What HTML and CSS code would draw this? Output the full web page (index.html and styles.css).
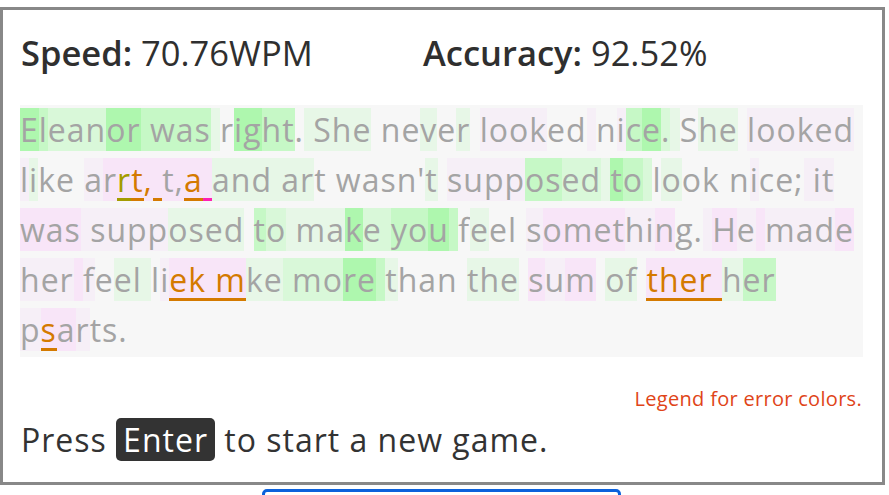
FILE: index.html
```html
<!DOCTYPE html>
<html>
<head>
<meta charset="utf-8">
<link rel="stylesheet" href="styles.css">
</head>
<body>
<div class="game">
  <div class="stats">
    <div class="stat"><b>Speed:</b> 70.76WPM</div>
    <div class="stat"><b>Accuracy:</b> 92.52%</div>
  </div>
  <div class="passage"><span class="g4">E</span><span class="g3">l</span><span class="g2">ean</span><span class="g4">or</span><span class="g3"> was</span><span class="g1"> </span>r<span class="g4">ig</span><span class="g3">ht</span>.<span class="g1"> She</span> ne<span class="g1">v</span>e<span class="g1">r</span> <span class="p1">look</span>ed<span class="p1"> </span>n<span class="p1">i</span><span class="g3">c</span><span class="g4">e</span><span class="g2">.</span><span class="g1"> </span>S<span class="g1">he</span> <span class="p1">looked</span> <span class="p1">l</span><span class="g1">i</span>ke <span class="p1">a</span><span class="p2">r</span><span class="p2 ins">r</span><span class="p2 err ul">t</span><span class="p2 err">,</span><span class="p2 ul"> </span><span class="p2">t,</span><span class="p2 err ul">a</span><span class="p2 ulm"> </span><span class="g1">and </span><span class="g1">ar</span>t wasn'<span class="g1">t</span> <span class="p1">supp</span><span class="g3">os</span><span class="g2">ed</span><span class="g1"> </span><span class="g4">t</span><span class="g3">o</span><span class="g2"> </span>l<span class="g1">o</span>ok n<span class="p1">i</span>ce;<span class="p1"> it</span> <span class="p2">was</span><span class="p1"> supp</span><span class="g1">osed</span> <span class="g3">t</span><span class="g2">o</span><span class="g1"> ma</span><span class="g4">k</span><span class="g2">e </span><span class="g3">yo</span><span class="g4">u</span><span class="g3"> </span>f<span class="g1">e</span>el <span class="p1">s</span><span class="p2">omet</span><span class="p1">hi</span><span class="p2">n</span>g.<span class="p1"> </span><span class="p2">H</span><span class="p1">e</span><span class="p2"> </span><span class="p1">mad</span><span class="p2">e</span> <span class="p1">her</span><span class="p2"> </span><span class="p1">f</span>e<span class="g1">el </span>l<span class="p1">i</span><span class="p2 err ul">ek m</span><span class="g1">ke</span><span class="g2"> mo</span><span class="g4">re</span><span class="g3"> </span><span class="g1">t</span>han <span class="g1">the</span> <span class="p2">s</span><span class="p1">u</span><span class="p2">m</span> <span class="g1">of</span> <span class="p2 err ul">ther </span><span class="g1">h</span><span class="g3">er</span> <span class="p1">p</span><span class="p2 err ul">s</span><span class="p2">a</span><span class="p1">r</span>ts.</div>
  <div class="legend">Legend for error colors.</div>
  <div class="prompt">Press <kbd class="key">Enter</kbd> to start a new game.</div>
</div>
<div class="button"></div>
</body>
</html>
```
FILE: styles.css
```css
html, body {
  margin: 0;
  padding: 0;
  background: #fff;
}
body {
  font-family: "Open Sans", "Noto Sans", sans-serif;
  color: #333;
}
.game {
  margin-top: 7px;
  width: 885px;
  box-sizing: border-box;
  border: 3px solid #888;
  padding: 22px 19px 20px 17px;
}
.stats {
  display: grid;
  grid-template-columns: 402px auto;
  font-size: 34.5px;
  line-height: 1.2;
  color: #2f2f2f;
}
.stat {
  padding-left: 1px;
}
.stat b {
  font-weight: 600;
}
.passage {
  margin-top: 32px;
  background: #f7f7f7;
  font-size: 32px;
  letter-spacing: 1px;
  line-height: 50px;
  color: #a4a4a4;
  padding-bottom: 2px;
}
.g1 { background: #e7f7e7; }
.g2 { background: #d9f8d9; }
.g3 { background: #c6f8c6; }
.g4 { background: #aef7ae; }
.p1 { background: #f6eff7; }
.p2 { background: #f8e5f8; }
.err { color: #d47a00; }
.ins { color: #a39c00; box-shadow: inset 0 -3px 0 #a39c00; }
.ul { box-shadow: inset 0 -3px 0 #d47a00; }
.ulm { box-shadow: inset 0 -3px 0 #ff1fb4; }
.legend {
  margin-top: 28px;
  text-align: right;
  font-size: 20px;
  letter-spacing: 0.3px;
  color: #e04418;
  padding-right: 1px;
}
.prompt {
  margin-top: 6px;
  font-size: 32px;
  letter-spacing: 1px;
  line-height: 44px;
  color: #333;
  padding-left: 1px;
}
.key {
  font-family: inherit;
  font-size: 32px;
  background: #333;
  color: #fff;
  border-radius: 5px;
  padding: 0 7px;
}
.button {
  margin: 4px 0 0 262px;
  width: 353px;
  height: 20px;
  border: 3px solid #0b61dc;
  border-radius: 5px;
}
```
